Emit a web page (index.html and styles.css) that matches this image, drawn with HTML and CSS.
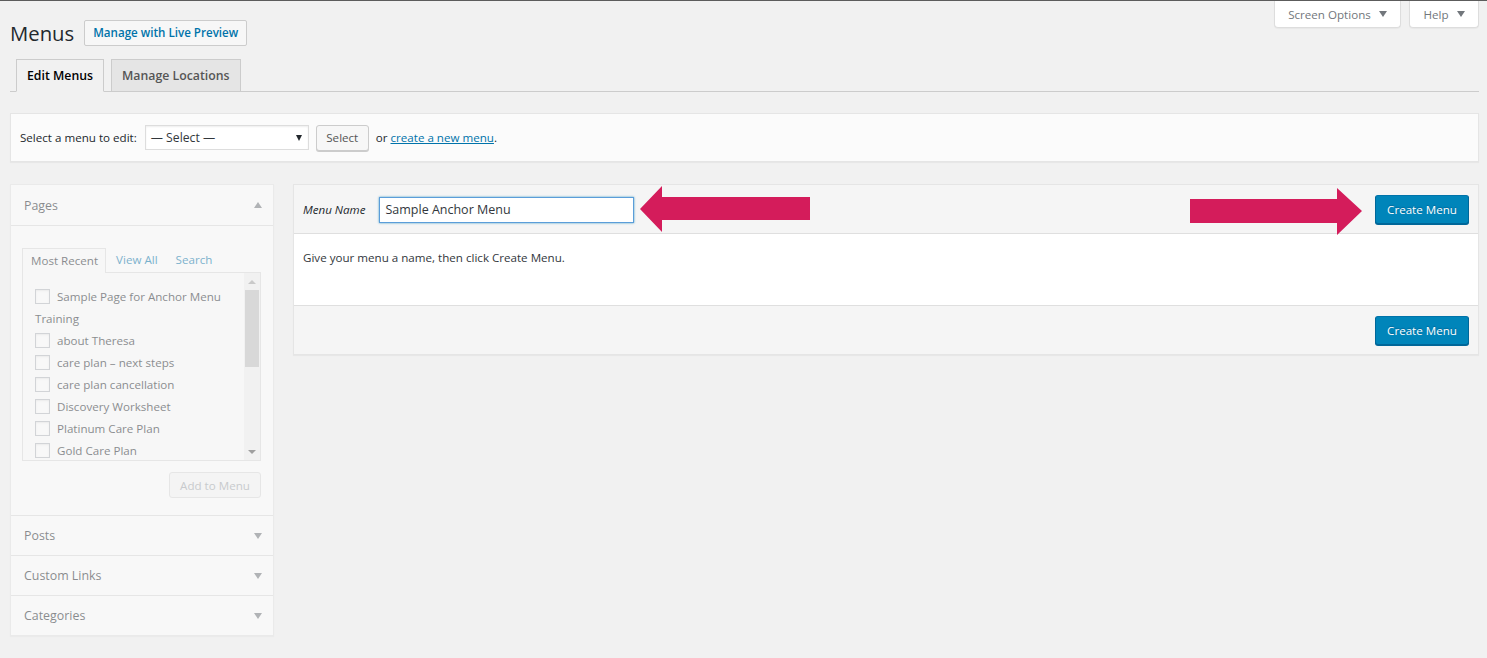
FILE: index.html
```html
<!DOCTYPE html>
<html lang="en">

<head>
    <meta charset="UTF-8">
    <meta name="viewport" content="width=device-width, initial-scale=1.0">
    <title>Menus</title>
    <link rel="stylesheet" href="styles.css">
</head>

<body>
    <div class="wrap">
        <div class="screen-meta-links">
            <button class="meta-tab">Screen Options <span class="tri-down"></span></button>
            <button class="meta-tab">Help <span class="tri-down"></span></button>
        </div>

        <div class="title-row">
            <h1>Menus</h1>
            <a class="title-action" href="#">Manage with Live Preview</a>
        </div>

        <nav class="nav-tabs">
            <a class="nav-tab active" href="#">Edit Menus</a>
            <a class="nav-tab" href="#">Manage Locations</a>
        </nav>

        <div class="manage-menus">
            <span>Select a menu to edit:</span>
            <div class="select-box"><span>— Select —</span><span class="tri-down dark"></span></div>
            <button class="button">Select</button>
            <span class="or">or <a href="#">create a new menu</a>.</span>
        </div>

        <div class="columns">
            <!-- left: boxes to add items (disabled until a menu exists) -->
            <div class="side">
                <ul class="accordion">
                    <li class="section open">
                        <h3 class="section-title">Pages <span class="tri-up"></span></h3>
                        <div class="section-content">
                            <div class="tabs">
                                <span class="tab active">Most Recent</span>
                                <a class="tab" href="#">View All</a>
                                <a class="tab" href="#">Search</a>
                            </div>
                            <div class="tabs-panel">
                                <ul class="checklist">
                                    <li><span class="check"></span>Sample Page for Anchor Menu Training</li>
                                    <li><span class="check"></span>about Theresa</li>
                                    <li><span class="check"></span>care plan – next steps</li>
                                    <li><span class="check"></span>care plan cancellation</li>
                                    <li><span class="check"></span>Discovery Worksheet</li>
                                    <li><span class="check"></span>Platinum Care Plan</li>
                                    <li><span class="check"></span>Gold Care Plan</li>
                                </ul>
                                <div class="scrollbar">
                                    <span class="sb-up"></span>
                                    <span class="sb-thumb"></span>
                                    <span class="sb-down"></span>
                                </div>
                            </div>
                            <div class="add-row">
                                <button class="button disabled">Add to Menu</button>
                            </div>
                        </div>
                    </li>
                    <li class="section">
                        <h3 class="section-title">Posts <span class="tri-down"></span></h3>
                    </li>
                    <li class="section">
                        <h3 class="section-title">Custom Links <span class="tri-down"></span></h3>
                    </li>
                    <li class="section">
                        <h3 class="section-title">Categories <span class="tri-down"></span></h3>
                    </li>
                </ul>
            </div>

            <!-- right: menu editor -->
            <div class="main">
                <div class="menu-header">
                    <label class="menu-name-label" for="menu-name">Menu Name</label>
                    <input id="menu-name" class="menu-name" type="text" value="Sample Anchor Menu">
                    <button class="button-primary">Create Menu</button>
                </div>
                <div class="menu-body">
                    <p>Give your menu a name, then click Create Menu.</p>
                </div>
                <div class="menu-footer">
                    <button class="button-primary">Create Menu</button>
                </div>

                <!-- annotation arrows -->
                <svg class="arrow arrow-left" width="170" height="46" viewBox="0 0 170 46">
                    <polygon points="0,23 22,0 22,11 170,11 170,34 22,34 22,46" fill="#d41c5b" />
                </svg>
                <svg class="arrow arrow-right" width="172" height="47" viewBox="0 0 172 47">
                    <polygon points="0,11 147,11 147,0 172,23 147,47 147,35 0,35" fill="#d41c5b" />
                </svg>
            </div>
        </div>
    </div>
</body>

</html>
```

FILE: styles.css
```css
* {
    box-sizing: border-box;
}

body {
    margin: 0;
    border-top: 1px solid #5c5c5c;
    background: #f1f1f1;
    color: #23282d;
    font-family: "Open Sans", "Noto Sans", sans-serif;
    font-size: 11.6px;
    height: 657px;
    overflow: hidden;
}

a {
    color: #0073aa;
}

button {
    font-family: inherit;
    font-size: inherit;
}

.wrap {
    display: flow-root;
    padding: 0 8px 0 10px;
}

/* triangles */
.tri-down,
.tri-up {
    display: inline-block;
    width: 0;
    height: 0;
    border-left: 4px solid transparent;
    border-right: 4px solid transparent;
}

.tri-down {
    border-top: 6px solid #72777c;
}

.tri-up {
    border-bottom: 6px solid #72777c;
}

.tri-down.dark {
    border-left-width: 3px;
    border-right-width: 3px;
    border-top: 6px solid #23282d;
}

/* screen options / help */
.screen-meta-links {
    float: right;
    display: flex;
    gap: 8px;
}

.meta-tab {
    height: 27px;
    padding: 0;
    border: 1px solid #ddd;
    border-top: none;
    border-radius: 0 0 4px 4px;
    background: #fff;
    color: #72777c;
    box-shadow: 0 1px 1px rgba(0, 0, 0, 0.04);
    display: flex;
    align-items: center;
    justify-content: center;
    gap: 8px;
    white-space: nowrap;
}

.meta-tab:first-child {
    width: 127px;
}

.meta-tab:last-child {
    width: 70px;
}

/* title */
.title-row {
    display: flex;
    align-items: center;
    margin-top: 19px;
}

h1 {
    margin: 0;
    font-size: 20.3px;
    font-weight: 400;
    line-height: 26px;
}

.title-action {
    margin-left: 10px;
    height: 26px;
    line-height: 24px;
    padding: 0 8px;
    border: 1px solid #ccc;
    border-radius: 2px;
    background: #f7f7f7;
    font-weight: 600;
    text-decoration: none;
}

/* tabs */
.nav-tabs {
    display: flex;
    gap: 7px;
    margin-top: 13px;
    padding-left: 6px;
    border-bottom: 1px solid #ccc;
}

.nav-tab {
    margin-bottom: -1px;
    height: 33px;
    line-height: 31px;
    padding: 0 10px;
    border: 1px solid #ccc;
    background: #e5e5e5;
    color: #555;
    font-size: 12.3px;
    font-weight: 600;
    text-decoration: none;
}

.nav-tab.active {
    background: #f1f1f1;
    border-bottom-color: #f1f1f1;
    color: #000;
}

/* select bar */
.manage-menus {
    display: flex;
    align-items: center;
    margin-top: 21px;
    height: 49px;
    padding: 0 9px;
    background: #fbfbfb;
    border: 1px solid #e5e5e5;
    box-shadow: 0 1px 1px rgba(0, 0, 0, 0.04);
}

.select-box {
    display: flex;
    align-items: center;
    justify-content: space-between;
    margin-left: 8px;
    width: 164px;
    height: 25px;
    padding: 0 6px 0 5px;
    border: 1px solid #ddd;
    background: #fff;
    box-shadow: inset 0 1px 2px rgba(0, 0, 0, 0.07);
    color: #32373c;
    font-size: 12.2px;
}

.button {
    height: 26px;
    padding: 0 10px;
    border: 1px solid #ccc;
    border-radius: 3px;
    background: #f7f7f7;
    box-shadow: 0 1px 0 #ccc;
    color: #555;
}

.manage-menus .button {
    margin-left: 7px;
    width: 53px;
    padding: 0;
}

.or {
    margin-left: 7px;
}

/* columns */
.columns {
    display: flex;
    align-items: flex-start;
    gap: 19px;
    margin-top: 22px;
}

.side {
    width: 264px;
    flex: none;
}

.accordion {
    list-style: none;
    margin: 0;
    padding: 0;
    background: #fff;
    border: 1px solid #e5e5e5;
    box-shadow: 0 1px 1px rgba(0, 0, 0, 0.04);
    opacity: 0.5;
}

.section + .section {
    border-top: 1px solid #ddd;
}

.section-title {
    display: flex;
    align-items: center;
    justify-content: space-between;
    margin: 0;
    height: 39px;
    padding: 0 11px 0 13px;
    font-size: 12.4px;
    font-weight: 400;
    color: #23282d;
}

.section:first-child .section-title {
    height: 40px;
}

.section-content {
    border-top: 1px solid #ddd;
    padding: 22px 12px 17px 11px;
}

.tabs {
    display: flex;
    align-items: flex-end;
}

.tabs .tab {
    height: 24px;
    line-height: 24px;
    padding: 0 8px;
    color: #0073aa;
    text-decoration: none;
    font-size: 11.6px;
}

.tabs .tab + .tab {
    margin-left: 2px;
}

.tabs .tab.active {
    margin-bottom: -1px;
    height: 25px;
    line-height: 23px;
    padding: 0 7px 0 8px;
    border: 1px solid #ddd;
    border-bottom: none;
    background: #fdfdfd;
    color: #23282d;
}

.tabs-panel {
    display: flex;
    height: 189px;
    border: 1px solid #ddd;
    background: #fdfdfd;
    overflow: hidden;
}

.checklist {
    flex: 1;
    list-style: none;
    margin: 0;
    padding: 13px 6px 0 12px;
    line-height: 22px;
}

.check {
    display: inline-block;
    width: 15px;
    height: 15px;
    margin-right: 7px;
    border: 1px solid #b4b9be;
    background: #fff;
    box-shadow: inset 0 1px 2px rgba(0, 0, 0, 0.1);
    vertical-align: -3px;
}

.scrollbar {
    flex: none;
    width: 16px;
    background: #f1f1f1;
    display: flex;
    flex-direction: column;
    align-items: center;
}

.sb-up,
.sb-down {
    width: 0;
    height: 0;
    border-left: 4px solid transparent;
    border-right: 4px solid transparent;
}

.sb-up {
    margin-top: 7px;
    border-bottom: 4px solid #a3a3a3;
}

.sb-down {
    margin-top: auto;
    margin-bottom: 6px;
    border-top: 4px solid #505050;
}

.sb-thumb {
    margin-top: 6px;
    width: 14px;
    height: 77px;
    background: #c1c1c1;
}

.add-row {
    display: flex;
    justify-content: flex-end;
    margin-top: 11px;
}

.button.disabled {
    width: 92px;
    padding: 0;
    color: #a0a5aa;
    border-color: #ddd;
    box-shadow: none;
}

/* menu editor */
.main {
    flex: 1;
    position: relative;
    border: 1px solid #e5e5e5;
    box-shadow: 0 1px 1px rgba(0, 0, 0, 0.04);
    background: #fff;
}

.menu-header,
.menu-footer {
    display: flex;
    align-items: center;
    height: 49px;
    padding: 0 9px 0 9px;
    background: #f5f5f5;
}

.menu-header {
    border-bottom: 1px solid #dfdfdf;
}

.menu-footer {
    justify-content: flex-end;
    border-top: 1px solid #dfdfdf;
}

.menu-name-label {
    font-style: italic;
    margin-right: 14px;
}

.menu-name {
    width: 255px;
    height: 26px;
    padding: 0 5px;
    border: 1px solid #5b9dd9;
    box-shadow: 0 0 2px rgba(30, 140, 190, 0.8);
    outline: none;
    font-family: inherit;
    font-size: 12.5px;
    color: #32373c;
    margin-top: 1px;
}

.button-primary {
    margin-left: auto;
    height: 29px;
    width: 94px;
    padding: 0;
    border: 1px solid #0073aa;
    border-color: #0073aa #006799 #006799;
    border-radius: 3px;
    background: #0085ba;
    box-shadow: 0 1px 0 #006799;
    color: #fff;
    text-shadow: 0 -1px 1px #006799;
}

.menu-body {
    height: 71px;
    padding: 15px 9px 0;
}

.menu-body p {
    margin: 0;
    line-height: 18px;
    color: #32373c;
}

.arrow {
    position: absolute;
    display: block;
}

.arrow-left {
    left: 346px;
    top: 1px;
}

.arrow-right {
    right: 116px;
    top: 3px;
}
```
